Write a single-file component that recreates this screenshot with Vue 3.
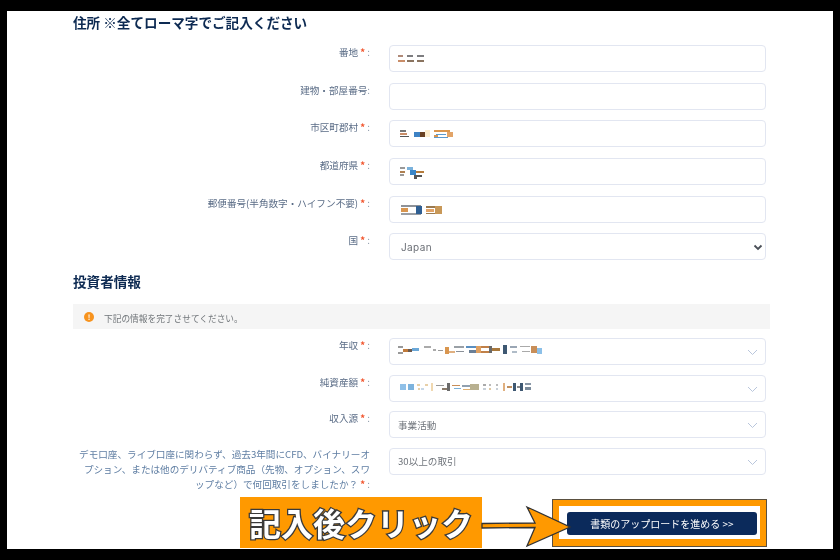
<script setup>
const f = '"Noto Sans CJK JP"'
const topRows = [
  { label: '番地', req: true, top: 45, bits: [
    [398,55,5,2,'#b08a78'],[398,60,7,2,'#c98d68'],[407,55,6,2,'#7d7d80'],[407,60,7,2,'#8a7460'],[417,55,7,2,'#7d7d80'],[417,60,7,2,'#8a7460']
  ] },
  { label: '建物・部屋番号', req: false, top: 83, bits: [] },
  { label: '市区町郡村', req: true, top: 121, bits: [
    [400,131,6,2,'#777777'],[400,134,7,2,'#c98d68'],[400,137,9,1,'#555555'],[425,131,5,7,'#fdeccc'],[414,133,8,5,'#3d82c4'],[420,133,5,5,'#6a4020'],
    [434,131,16,2,'#d9964f'],[434,136,4,2,'#d9964f'],[436,135,10,1,'#5b9ad0'],[434,138,14,1,'#5b9ad0'],[447,133,6,5,'#e2a468']
  ] },
  { label: '都道府県', req: true, top: 158, bits: [
    [400,167,5,2,'#999999'],[400,171,5,2,'#b08050'],[400,174,4,2,'#999999'],[407,167,6,3,'#7ab2dc'],[410,170,6,5,'#3a86c8'],[416,171,8,2,'#b57c3c'],[414,175,8,2,'#555555'],[414,177,3,2,'#555555']
  ] },
  { label: '郵便番号(半角数字・ハイフン不要)', req: true, top: 196, bits: [
    [401,205,20,2,'#8e9298'],[401,208,7,4,'#d9964f'],[401,213,20,2,'#9a9ea4'],[416,206,6,8,'#2f5f93'],[426,206,15,2,'#9a7a50'],[426,209,8,3,'#e2a468'],[435,206,7,8,'#c89858'],[426,213,9,1,'#9a7a50']
  ] }
]
const lowRows = [
  { label: '年収', top: 338, bits: [
    [398,346,5,2,'#999999'],[398,352,5,2,'#999999'],[403,349,5,3,'#c07a3a'],[408,349,4,3,'#6b5a50'],[412,348,7,3,'#6ba8d8'],[424,346,7,2,'#aaaaaa'],[433,349,3,2,'#aaaaaa'],
    [438,350,5,1,'#999999'],[445,347,4,7,'#d9964f'],[449,351,6,2,'#e0b080'],[454,346,10,2,'#9aa0a6'],[456,351,8,1,'#8a9098'],[466,346,10,2,'#5b8fc0'],[469,350,7,3,'#6a7f96'],
    [476,346,5,7,'#e0a060'],[481,346,8,2,'#c08048'],[481,351,8,2,'#c08048'],[489,346,3,7,'#6a6a6a'],[492,348,8,3,'#a8783c'],[503,345,4,9,'#3e5872'],[510,346,7,2,'#9aa6b4'],[512,351,5,2,'#b0bcc8'],[520,346,10,1,'#aaaaaa'],[522,351,8,1,'#aaaaaa'],[531,346,6,7,'#c88e58'],[537,348,5,6,'#8cc0e8']
  ] },
  { label: '純資産額', top: 375, bits: [
    [400,384,6,6,'#8fc0e8'],[408,384,6,6,'#7db3dd'],[417,384,3,2,'#e8d0a8'],[421,388,3,2,'#c8d8e8'],[425,384,3,2,'#e8d0a8'],[418,388,2,2,'#e8d0a8'],
    [431,383,2,8,'#f0d8b0'],[436,385,8,1,'#999999'],[442,388,8,2,'#8a7a6a'],[447,383,3,8,'#6b6b6b'],[452,385,8,1,'#c88e58'],[454,388,7,1,'#7ab0d8'],[462,385,12,2,'#90a0b0'],[463,389,12,1,'#e0b070'],[470,384,9,6,'#b8b090'],
    [483,384,3,2,'#aaaaaa'],[483,388,3,2,'#c8d0d8'],[489,384,2,2,'#bbbbbb'],[489,388,2,2,'#e0c8a0'],[496,384,2,2,'#bbbbbb'],[496,388,2,2,'#c8d0d8'],[503,383,2,8,'#e0b080'],[507,386,5,2,'#c09060'],[513,383,3,8,'#3e5872'],[517,386,4,2,'#8a8a8a'],[520,383,3,8,'#3e5872'],[525,383,6,2,'#8a98a8'],[525,387,6,3,'#7a8a9a']
  ] }
]
const vb = t => `390 ${t + 1} 375 25`
</script>

<template>
  <div class="frame" :style="{ fontFamily: f }">
    <div class="sheet">
      <h2 class="heading first">住所 ※全てローマ字でご記入ください</h2>

      <div class="stack">
        <div v-for="r in topRows" :key="r.label" class="row">
          <div class="label">{{ r.label }}<span v-if="r.req" class="star"> *</span><span class="colon">{{ r.req ? ' :' : ':' }}</span></div>
          <div class="field">
            <svg class="mosaic" width="375" height="25" :viewBox="vb(r.top)">
              <rect v-for="(b, i) in r.bits" :key="i" :x="b[0]" :y="b[1]" :width="b[2]" :height="b[3]" :fill="b[4]" />
            </svg>
          </div>
        </div>
        <div class="row">
          <div class="label">国<span class="star"> *</span><span class="colon"> :</span></div>
          <div class="field">
            <span class="latin">Japan</span>
            <svg class="native" width="10" height="7" viewBox="0 0 10 7"><path d="M1.5 1.5 5 5l3.5-3.5" fill="none" stroke="#4a4f57" stroke-width="1.8"/></svg>
          </div>
        </div>
      </div>

      <h2 class="heading second">投資者情報</h2>

      <div class="notice">
        <span class="dot">!</span>
        <span class="noticetext">下記の情報を完了させてください。</span>
      </div>

      <div class="stack low">
        <div v-for="r in lowRows" :key="r.label" class="row">
          <div class="label">{{ r.label }}<span class="star"> *</span><span class="colon"> :</span></div>
          <div class="field">
            <svg class="mosaic" width="375" height="25" :viewBox="vb(r.top)">
              <rect v-for="(b, i) in r.bits" :key="i" :x="b[0]" :y="b[1]" :width="b[2]" :height="b[3]" :fill="b[4]" />
            </svg>
            <svg class="chev" width="11" height="7" viewBox="0 0 11 7"><path d="M1 1l4.5 4.5L10 1" fill="none" stroke="#b9c6dc" stroke-width="1"/></svg>
          </div>
        </div>
        <div class="row">
          <div class="label">収入源<span class="star"> *</span><span class="colon"> :</span></div>
          <div class="field">
            <span class="value">事業活動</span>
            <svg class="chev" width="11" height="7" viewBox="0 0 11 7"><path d="M1 1l4.5 4.5L10 1" fill="none" stroke="#b9c6dc" stroke-width="1"/></svg>
          </div>
        </div>
        <div class="row">
          <div class="label long">デモ口座、ライブ口座に関わらず、過去3年間にCFD、バイナリーオプション、または他のデリバティブ商品（先物、オプション、スワップなど）で何回取引をしましたか？<span class="star"> *</span><span class="colon"> :</span></div>
          <div class="field">
            <span class="value">30以上の取引</span>
            <svg class="chev" width="11" height="7" viewBox="0 0 11 7"><path d="M1 1l4.5 4.5L10 1" fill="none" stroke="#b9c6dc" stroke-width="1"/></svg>
          </div>
        </div>
      </div>

      <div class="callout">
        <div class="tag">記入後クリック</div>
        <div class="btnbox">
          <div class="btnwhite"><button class="btn">書類のアップロードを進める &gt;&gt;</button></div>
        </div>
        <svg class="arrow" width="92" height="44" viewBox="0 0 92 44">
          <path d="M1 18.5 54 18 46 2 89 22 46 41 54 22.5 1 23Z" fill="#ff9900" stroke="#333333" stroke-width="1.3" stroke-linejoin="miter"/>
        </svg>
      </div>
    </div>
  </div>
</template>

<style>
html, body { margin: 0; background: #000; }
</style>

<style scoped>
.frame {
  width: 840px;
  height: 560px;
  box-sizing: border-box;
  padding: 11px 7px;
  background: #000;
  overflow: hidden;
}
.sheet {
  position: relative;
  height: 538px;
  background: #fff;
  overflow: hidden;
  padding-left: 66px;
  filter: blur(0.55px);
}
.heading {
  margin: 0;
  font-size: 13.6px;
  line-height: 18px;
  font-weight: 700;
  color: #0d2a52;
}
.first { padding-top: 2px; }
.first + .stack { margin-top: 14px; }
.second { margin-top: 11.5px; }
.stack {
  margin-top: 13px;
  width: 693px;
  display: flex;
  flex-direction: column;
  gap: 10.7px;
}
.row {
  display: flex;
  align-items: flex-start;
  gap: 19px;
}
.label {
  width: 297px;
  padding-top: 1px;
  text-align: right;
  font-size: 9.6px;
  line-height: 13px;
  color: #5a6c86;
}
.star { color: #f1542c; font-weight: 700; }
.colon { color: #8a97a8; }
.field {
  position: relative;
  flex: 1;
  height: 27px;
  box-sizing: border-box;
  border: 1px solid #e2e6f1;
  border-radius: 4px;
  background: #fff;
  display: flex;
  align-items: center;
}
.mosaic { position: absolute; left: 0; top: 0; }
.latin {
  padding-left: 11px;
  font-family: Inter, sans-serif;
  font-size: 10px;
  color: #6b6f76;
  letter-spacing: 0.4px;
}
.native { position: absolute; right: 2px; top: 10px; }
.notice {
  margin-top: 14.5px;
  width: 697px;
  height: 25px;
  background: #f5f5f5;
  display: flex;
  align-items: center;
  font-size: 8.7px;
  color: #6f7478;
  gap: 10px;
  padding-left: 11px;
  box-sizing: border-box;
}
.noticetext { margin-top: 3px; }
.dot {
  width: 10px;
  height: 10px;
  margin-top: 1px;
  border-radius: 50%;
  background: #f7931e;
  color: #fff;
  font-size: 7px;
  line-height: 10px;
  text-align: center;
  font-weight: 700;
}
.low { margin-top: 8.5px; gap: 9.6px; }
.long {
  width: 295px;
  margin: -2px 0 0 2px;
  line-height: 15px;
  color: #5f7ea3;
  line-break: loose;
  text-spacing-trim: space-all;
}
.value { padding-left: 8px; font-size: 9.6px; color: #70757c; }
.chev { position: absolute; right: 7px; top: 10px; }
.callout {
  position: absolute;
  left: 233px;
  top: 486px;
  display: flex;
  align-items: flex-start;
}
.tag {
  width: 242px;
  height: 51px;
  background: #ff9900;
  color: #fff;
  font-size: 32px;
  font-weight: 700;
  line-height: 50px;
  text-align: center;
  white-space: nowrap;
  -webkit-text-stroke: 2.6px #3a3a3a;
  paint-order: stroke fill;
}
.arrow { position: absolute; left: 241px; top: 8px; }
.btnbox {
  margin-left: 70px;
  margin-top: 2px;
  width: 215px;
  height: 48px;
  box-sizing: border-box;
  background: #ff9900;
  border: 1px solid #5a5040;
  padding: 6px;
}
.btnwhite {
  background: #fff;
  height: 33px;
  box-sizing: border-box;
  padding: 6px 3px 4px 8px;
  display: flex;
}
.btn {
  flex: 1;
  height: 23px;
  border: 0;
  border-radius: 3px;
  background: #0b2a5b;
  color: #fff;
  font-family: "Noto Sans CJK JP", sans-serif;
  font-size: 10px;
  padding: 0;
}
</style>
